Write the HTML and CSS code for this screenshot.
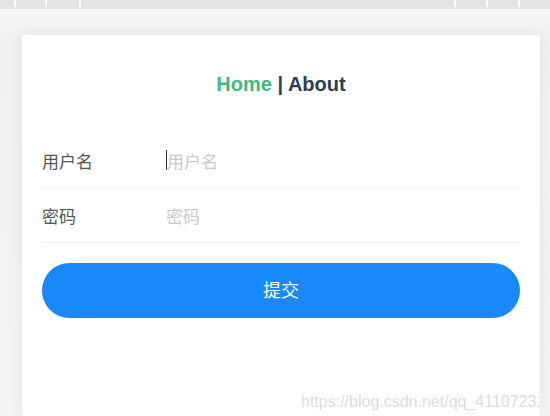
FILE: index.html
```html
<!DOCTYPE html>
<html lang="zh-CN">
<head>
    <meta charset="UTF-8">
    <meta name="viewport" content="width=device-width, initial-scale=1.0">
    <title>Login</title>
    <link rel="stylesheet" href="styles.css">
</head>
<body>
    <div class="ruler">
        <div class="ticks ticks-left">
            <span></span><span></span><span></span>
        </div>
        <div class="ticks ticks-right">
            <span></span><span></span><span></span>
        </div>
    </div>

    <div class="page">
        <div class="card">
            <nav class="nav">
                <a href="#" class="active">Home</a> | <a href="#">About</a>
            </nav>

            <form class="login-form">
                <div class="field">
                    <label class="field-label">用户名</label>
                    <span class="caret"></span>
                    <input class="field-input" type="text" placeholder="用户名">
                </div>
                <div class="field">
                    <label class="field-label">密码</label>
                    <input class="field-input" type="password" placeholder="密码">
                </div>
                <button type="submit" class="submit">提交</button>
            </form>

            <div class="watermark">https://blog.csdn.net/qq_41107231</div>
        </div>
    </div>
</body>
</html>
```

FILE: styles.css
```css
html, body {
    height: 100%;
}

body {
    margin: 0;
    background: #f8f8f8;
    font-family: 'Liberation Sans', Arial, 'Noto Sans CJK SC', sans-serif;
    overflow: hidden;
    display: flex;
    flex-direction: column;
}

.ruler {
    height: 9px;
    background: #e4e4e4;
    display: flex;
    justify-content: space-between;
    flex-shrink: 0;
}

.ticks {
    display: flex;
    height: 7px;
}

.ticks span {
    width: 2px;
    background: #fff;
}

.ticks-left {
    padding-left: 14px;
    gap: 29px;
}

.ticks-left span:nth-child(3) {
    margin-left: 3px;
}

.ticks-right {
    padding-right: 30px;
    gap: 30px;
}

.page {
    flex: 1;
    padding: 26px 10px 0 21px;
    background: linear-gradient(to bottom, #f7f7f7, #f1f1f1 30px, #f5f5f5);
}

.card {
    position: relative;
    height: 100%;
    background: #fff;
    box-shadow: 0 0 14px rgba(0, 0, 0, 0.07);
    border-left: 1px solid #ececec;
    overflow: hidden;
}

.nav {
    margin-top: 37px;
    text-align: center;
    font-size: 20px;
    font-weight: bold;
    line-height: 24px;
    color: #2c3e50;
}

.nav a {
    color: #2c3e50;
    text-decoration: none;
}

.nav a.active {
    color: #42b983;
}

.login-form {
    margin-top: 37px;
    padding: 0 20px;
}

.field {
    display: flex;
    align-items: center;
    height: 54px;
    border-bottom: 1px solid #f0f1f3;
}

.field-label {
    width: 124px;
    flex-shrink: 0;
    font-family: 'Noto Sans CJK SC', sans-serif;
    font-size: 17px;
    color: #555;
}

.caret {
    width: 1px;
    height: 20px;
    background: #333;
}

.field-input {
    flex: 1;
    border: none;
    outline: none;
    padding: 0;
    font-family: 'Noto Sans CJK SC', sans-serif;
    font-size: 17px;
    color: #333;
    background: transparent;
}

.field-input::placeholder {
    color: #c8c9cc;
}

.submit {
    display: block;
    width: 100%;
    height: 55px;
    margin-top: 20px;
    padding: 0 0 4px;
    border: none;
    border-radius: 28px;
    background: #1989fa;
    color: #fff;
    font-family: 'Noto Sans CJK SC', sans-serif;
    font-size: 18px;
    cursor: pointer;
}

.watermark {
    position: absolute;
    left: 279px;
    bottom: 5px;
    white-space: nowrap;
    font-size: 16px;
    color: #dcdcdc;
}
```
